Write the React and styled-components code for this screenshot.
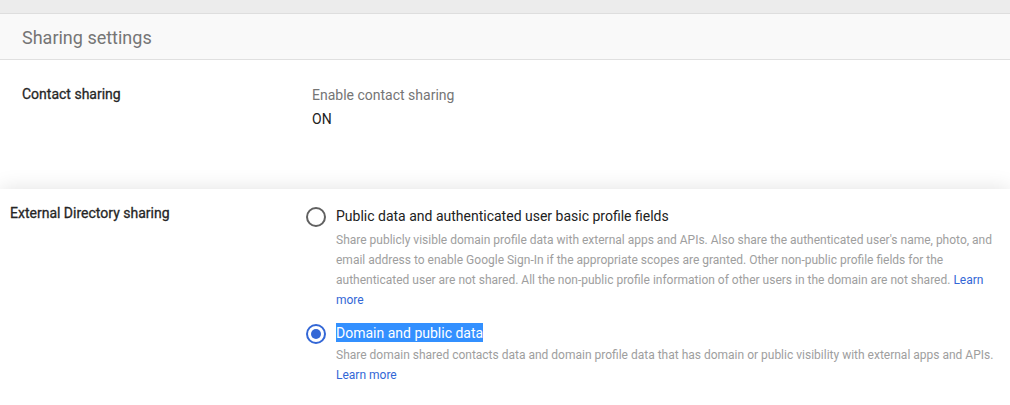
import React from "react";
import styled, { createGlobalStyle } from "styled-components";

const GlobalStyle = createGlobalStyle`
  html, body { margin: 0; padding: 0; background: #fff; }
  body { font-family: Roboto, "Noto Sans", Arial, sans-serif; -webkit-font-smoothing: antialiased; }
`;

const Page = styled.div`
  width: 1010px;
  height: 405px;
  overflow: hidden;
  background: #fff;
`;

const TopBand = styled.div`
  height: 13px;
  background: #ececec;
  border-bottom: 1px solid #dedede;
`;

const Header = styled.div`
  height: 46px;
  box-sizing: border-box;
  padding: 1px 22px 0;
  background: #f9f9f9;
  border-bottom: 1px solid #e0e0e0;
  display: flex;
  align-items: center;
  font-size: 18px;
  color: #757575;
`;

const Section = styled.div`
  display: grid;
  grid-template-columns: ${(p) => p.$labelWidth}px 1fr;
  padding: ${(p) => p.$pad};
  height: ${(p) => (p.$height ? `${p.$height}px` : "auto")};
  box-sizing: border-box;
  background: #fff;
  box-shadow: ${(p) => (p.$raised ? "0 0 20px rgba(0,0,0,0.12)" : "none")};
  position: relative;
`;

const Label = styled.div`
  padding-top: ${(p) => p.$pt || 0}px;
  font-size: 14px;
  font-weight: 400;
  -webkit-text-stroke: 0.3px #262626;
  color: #262626;
  line-height: 20px;
`;

const Value = styled.div`
  padding-top: 1px;
  display: flex;
  flex-direction: column;
  font-size: 14px;
  line-height: 24px;
`;

const Muted = styled.span`
  color: #757575;
`;

const Strong = styled.span`
  color: #212121;
`;

const Options = styled.div`
  display: flex;
  flex-direction: column;
  gap: 12px;
  padding-top: 2px;
`;

const Option = styled.div`
  display: grid;
  grid-template-columns: 30px 1fr;
  align-items: start;
`;

const RadioWrap = styled.div`
  width: 20px;
  height: 23px;
  display: flex;
  align-items: center;
  justify-content: center;
`;

const OptionBody = styled.div`
  max-width: 662px;
`;

const OptionTitle = styled.div`
  font-size: 14px;
  line-height: 23px;
  color: #212121;
`;

const Selected = styled.span`
  background: #3390ff;
  color: #fff;
  padding: 2px 0 1px;
`;

const Desc = styled.div`
  padding-top: ${(p) => p.$pt || 0}px;
  font-size: 12px;
  line-height: 20px;
  color: #9e9e9e;
`;

const Link = styled.a`
  color: #3367d6;
  text-decoration: none;
`;

function Radio({ checked }) {
  return (
    <RadioWrap>
      <svg width="20" height="20" viewBox="0 0 20 20">
        <circle
          cx="10"
          cy="10"
          r="9"
          fill="none"
          stroke={checked ? "#3367d6" : "#616161"}
          strokeWidth="2"
        />
        {checked && <circle cx="10" cy="10" r="5" fill="#3367d6" />}
      </svg>
    </RadioWrap>
  );
}

export default function App() {
  return (
    <Page>
      <GlobalStyle />
      <TopBand />
      <Header>Sharing settings</Header>
      <Section $labelWidth={290} $pad="22px 22px 0" $height={129}>
        <Label $pt={2}>Contact sharing</Label>
        <Value>
          <Muted>Enable contact sharing</Muted>
          <Strong>ON</Strong>
        </Value>
      </Section>
      <Section $labelWidth={296} $pad="14px 10px 40px" $raised>
        <Label>External Directory sharing</Label>
        <Options>
          <Option>
            <Radio />
            <OptionBody>
              <OptionTitle>Public data and authenticated user basic profile fields</OptionTitle>
              <Desc $pt={2}>
                Share publicly visible domain profile data with external apps and APIs. Also share the
                authenticated user's name, photo, and email address to enable Google Sign-In if the
                appropriate scopes are granted. Other non-public profile fields for the authenticated
                user are not shared. All the non-public profile information of other users in the
                domain are not shared. <Link href="#">Learn more</Link>
              </Desc>
            </OptionBody>
          </Option>
          <Option>
            <Radio checked />
            <OptionBody>
              <OptionTitle>
                <Selected>Domain and public data</Selected>
              </OptionTitle>
              <Desc>
                Share domain shared contacts data and domain profile data that has domain or public
                visibility with external apps and APIs. <Link href="#">Learn more</Link>
              </Desc>
            </OptionBody>
          </Option>
        </Options>
      </Section>
    </Page>
  );
}
